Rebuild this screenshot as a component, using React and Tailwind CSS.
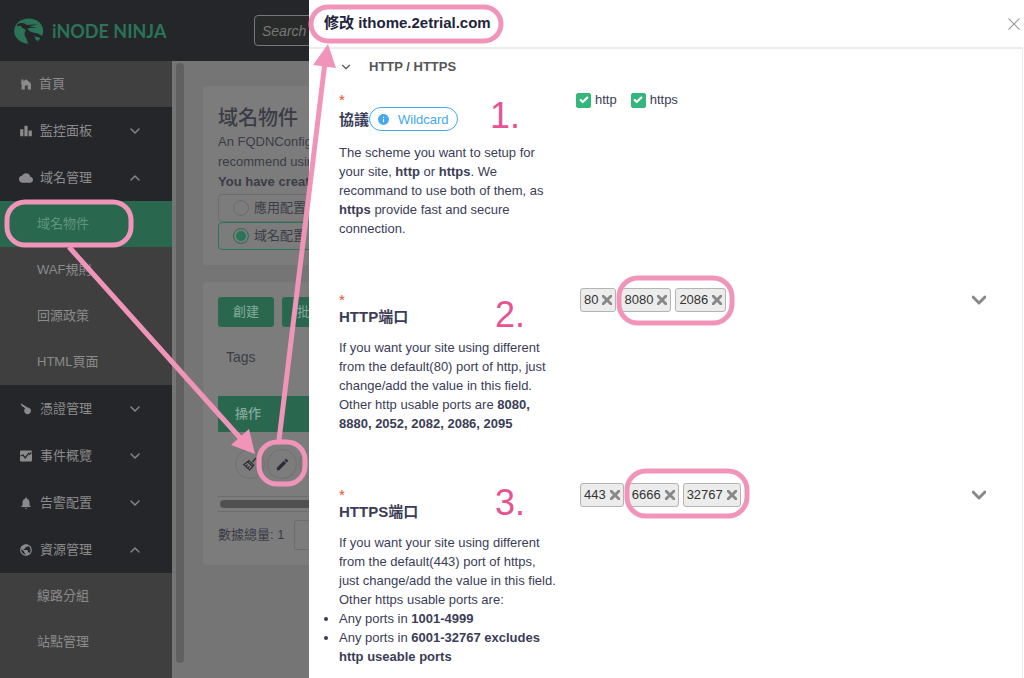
import {
  MdCloud,
  MdNotifications,
  MdPublic,
  MdEdit,
  MdInfo,
  MdLeaderboard,
} from 'react-icons/md'
import { ChevronDown, ChevronUp, X, Check } from 'lucide-react'

const tint = '#f095b9'

function HomeIcon({ className }) {
  return (
    <svg viewBox="0 0 14 14" className={className} fill="currentColor">
      <path d="M2.4 2.4 H4.4 V4.2 L7.2 2.2 L12 6.6 V12.4 H8.8 V8.6 H5.8 V12.4 H2.6 V7 H1.6 L2.4 6 Z" />
    </svg>
  )
}

function KeyIcon({ className }) {
  return (
    <svg viewBox="-1 -1 14 14" className={className} fill="currentColor">
      <path d="M1.2 0.6 L0.6 2 L2 2.6 L2.2 3.8 L3.6 4 L5 5.6 A3.4 3.4 0 1 0 7.6 4.4 Z" />
    </svg>
  )
}

function ChartIcon({ className }) {
  return (
    <svg viewBox="-1 -1 14 14" className={className}>
      <rect x="0" y="0.5" width="12" height="11" rx="1" fill="currentColor" />
      <path d="M0.5 6 L3 5 L5.2 8 L8.6 3.4 L9.6 4.4 L11.4 2.4" fill="none" stroke="#25262a" strokeWidth="1.3" />
    </svg>
  )
}

const menu = [
  { label: '監控面板', icon: MdLeaderboard },
  { label: '域名管理', icon: MdCloud, children: ['域名物件', 'WAF規則', '回源政策', 'HTML頁面'] },
  { label: '憑證管理', icon: KeyIcon },
  { label: '事件概覽', icon: ChartIcon },
  { label: '告警配置', icon: MdNotifications },
  { label: '資源管理', icon: MdPublic, children: ['線路分組', '站點管理'] },
]

function Logo() {
  return (
    <a href="#home" className="flex w-[240px] shrink-0 items-center gap-2 text-[#2b7458]">
      <svg viewBox="0 0 30 26" className="h-[26px] w-[30px]">
        <ellipse cx="14.7" cy="13" rx="14.5" ry="12.6" fill="currentColor" />
        <g fill="#25262a">
          <path d="M3 6.8 C4.6 5 7.4 4.6 9.6 5.2 C11 5.5 12 6.2 12.8 7 L24 6.2 L15 8.4 L23.4 9.4 L13.4 10.2 C14.4 12.4 16.4 14 19 14.6 C22.6 15.2 26 16.2 28.8 18.6 L26.6 21 C25.4 19.8 23.4 19 20.6 18.6 C20.8 20 21.6 21.6 23.2 22.6 L21 26 L15 26 C12.8 24.4 13.6 22.6 12.4 20.6 C11 18 9.6 16 11.6 12.4 C11 10.6 9.6 10.6 8 10 C7.6 8 5.6 7.2 3 8.4 Z" />
        </g>
        <path fill="currentColor" d="M20.6 18.6 L26.4 19.8 L23.4 22.8 L21.8 21.6 Z" />
      </svg>
      <span className="font-['Lato'] text-[18px] leading-6 font-bold">iNODE NINJA</span>
    </a>
  )
}

function Sidebar() {
  return (
    <nav className="w-[172px] shrink-0 bg-[#3f3f3f] text-[13px] text-[#8b8b8b]">
      <a href="#home" className="flex h-[46px] items-center bg-[#404040] pl-[19px]">
        <HomeIcon className="h-[14px] w-[14px]" />
        <span className="pl-[6px]">首頁</span>
      </a>
      {menu.map(({ label, icon: Icon, children }) => (
        <div key={label}>
          <button type="button" className="flex h-[47px] w-full items-center bg-[#25262a] pl-[19px] text-left">
            <Icon className="h-[14px] w-[14px]" />
            <span className="flex-1 pl-[7px]">{label}</span>
            {children ? <ChevronUp className="mr-[29px] h-4 w-4" /> : <ChevronDown className="mr-[29px] h-4 w-4" />}
          </button>
          {children?.map((child) => (
            <a
              key={child}
              href={`#${child}`}
              className={`flex h-[46px] items-center pl-[37px] ${child === '域名物件' ? 'bg-[#2a674f] text-[#5f9580]' : ''}`}
            >
              {child}
            </a>
          ))}
        </div>
      ))}
    </nav>
  )
}

function ConfigChoice({ label, checked }) {
  return (
    <label
      className={`flex h-7 items-center gap-[5px] rounded-sm border pl-[14px] text-[13px] ${checked ? 'border-[#2b7458]' : 'border-[#6c6c6c]'}`}
    >
      <input
        type="radio"
        name="config"
        defaultChecked={checked}
        className="h-4 w-4 appearance-none rounded-full border border-[#6c6c6c] checked:border-[#2b7458] checked:bg-[#2b7458] checked:shadow-[inset_0_0_0_2px_#7c7c7c]"
      />
      {label}
    </label>
  )
}

function BroomIcon() {
  return (
    <svg viewBox="0 0 14 14" className="h-[14px] w-[14px]" fill="none" stroke="#2b2c30" strokeWidth="1.2">
      <path d="M13 1 L9.4 5 M6 3.6 L10.6 8 L9.6 9.6 L4.6 4.8 Z M4.6 4.8 L0.8 7.6 L6.6 13 L9.6 9.6 M2.8 9.4 L4.6 7.6 M4.8 11.2 L6.6 9.4" />
    </svg>
  )
}

function RoundButton({ label, children }) {
  return (
    <button
      type="button"
      aria-label={label}
      className="flex h-[30px] w-[30px] shrink-0 items-center justify-center rounded-full border border-[#707070]"
    >
      {children}
    </button>
  )
}

function Page() {
  return (
    <main className="flex min-w-0 flex-1 flex-col gap-[17px] bg-[#757575] pt-[25px] pl-[19px] text-[#3b3c46]">
      <section className="rounded-sm bg-[#7c7c7c] px-[15px] pt-[18px] pb-[15px]">
        <h1 className="text-[20px] leading-7 font-medium">域名物件</h1>
        <p className="text-[13px] leading-5">
          An FQDNConfig
          <br />
          recommend using
        </p>
        <p className="text-[13px] leading-5 font-bold">You have created</p>
        <div className="pt-[2px]">
          <ConfigChoice label="應用配置" />
          <ConfigChoice label="域名配置" checked />
        </div>
      </section>

      <section className="rounded-sm bg-[#7c7c7c] px-[15px] pt-[15px] pb-[15px]">
        <div className="flex gap-2 text-[13px] text-[#83ab9b]">
          <button type="button" className="h-[30px] w-14 rounded-[3px] bg-[#2a674f]">創建</button>
          <button type="button" className="h-[30px] w-14 rounded-[3px] bg-[#2a674f]">批量</button>
        </div>
        <p className="px-2 pt-5 pb-[29px] text-[14px] leading-5">Tags</p>
        <table className="w-full text-left text-[13px]">
          <thead>
            <tr className="h-9 bg-[#2a674f] text-[#83ab9b]">
              <th className="pl-[17px] font-medium">操作</th>
            </tr>
          </thead>
          <tbody>
            <tr className="h-16">
              <td className="pl-[17px]">
                <div className="flex gap-[2px]">
                  <RoundButton label="清除"><BroomIcon /></RoundButton>
                  <RoundButton label="編輯"><MdEdit className="h-[15px] w-[15px] text-[#2c2d38]" /></RoundButton>
                  <RoundButton label="刪除" />
                </div>
              </td>
            </tr>
          </tbody>
        </table>
        <div className="border-y border-[#6d6d6d] py-[3px] pl-[2px]">
          <div className="h-2 rounded-full bg-[#505050]" />
        </div>
        <div className="flex items-center gap-[10px] pt-2 text-[13px]">
          <label htmlFor="page-size">數據總量: 1</label>
          <select id="page-size" className="h-[30px] w-24 appearance-none rounded-[3px] border border-[#6c6c6c] pl-6">
            <option>10</option>
          </select>
        </div>
      </section>
    </main>
  )
}

function Chips({ label, values }) {
  return (
    <div role="group" aria-label={label} className="flex flex-1 items-center gap-1 pr-[36px] pl-1 text-[13px] text-[#333]">
      {values.map((v) => (
        <span key={v} className="flex h-6 items-center gap-1 rounded-[3px] border border-[#b4b4b4] bg-[#ececec] px-[3px]">
          {v}
          <button type="button" aria-label={`Remove ${v}`} className="text-[#888]">
            <X className="h-[10px] w-[10px]" viewBox="5 5 14 14" strokeWidth={4} />
          </button>
        </span>
      ))}
      <button type="button" aria-label={`Open ${label}`} className="ml-auto text-[#888]">
        <ChevronDown className="h-[14px] w-[14px]" viewBox="5 5 14 14" strokeWidth={3} />
      </button>
    </div>
  )
}

function Field({ title, badge, control, children }) {
  return (
    <div className="flex items-start">
      <div className="w-[237px] shrink-0 pt-1 text-[#3b3d57]">
        <div className="h-[15px] text-[15px] leading-[15px] text-[#f04a24]">*</div>
        <div className="flex items-center text-[15px] leading-[19px] font-bold">
          {title}
          {badge}
        </div>
        <div className="w-[219px] pt-3 text-[13px] leading-[19px]">{children}</div>
      </div>
      <div className="flex h-6 min-w-0 flex-1 items-center">{control}</div>
    </div>
  )
}

function SchemeCheckbox({ name }) {
  return (
    <label className="flex items-center gap-1 text-[13px] text-[#3b3d57]">
      <span className="grid">
        <input
          type="checkbox"
          defaultChecked
          className="col-start-1 row-start-1 h-[15px] w-[15px] appearance-none rounded-[2px] border border-[#35b67d] checked:bg-[#35b67d]"
        />
        <Check className="pointer-events-none col-start-1 row-start-1 m-auto h-[10px] w-[10px] text-white" strokeWidth={5} />
      </span>
      {name}
    </label>
  )
}

function Drawer() {
  return (
    <div role="dialog" aria-labelledby="drawer-title" className="absolute inset-y-0 right-0 left-[309px] overflow-hidden bg-white">
      <header className="flex h-[47px] items-center justify-between pr-1 pl-[15px]">
        <h2 id="drawer-title" className="text-[15px] font-bold text-[#22243c]">修改 ithome.2etrial.com</h2>
        <button type="button" aria-label="Close" className="text-[#999]">
          <X className="h-3 w-3" viewBox="5 5 14 14" strokeWidth={1.4} />
        </button>
      </header>
      <div className="mr-px h-full border-t-2 border-r border-[#ececec] pl-[30px]">
        <button type="button" className="flex h-9 items-center text-[13px] font-bold text-[#555]">
          <ChevronDown className="h-[14px] w-[14px]" />
          <span className="pl-4">HTTP / HTTPS</span>
        </button>
        <div className="flex flex-col gap-[50px] pt-[3px]">
          <Field
            title="協議"
            badge={
              <span className="flex h-6 items-center gap-2 rounded-full border border-[#45a8f0] pr-2 pl-[7px] text-[13px] font-normal text-[#45a8f0]">
                <MdInfo className="h-[13px] w-[13px]" />
                Wildcard
              </span>
            }
            control={
              <div className="flex gap-[14px]">
                <SchemeCheckbox name="http" />
                <SchemeCheckbox name="https" />
              </div>
            }
          >
            The scheme you want to setup for your site, <b>http</b> or <b>https</b>. We recommand to use both of them,
            as <b>https</b> provide fast and secure connection.
          </Field>
          <Field title="HTTP端口" control={<Chips label="HTTP端口" values={['80', '8080', '2086']} />}>
            If you want your site using different from the default(80) port of http, just change/add the value in this
            field. Other http usable ports are <b>8080, 8880, 2052, 2082, 2086, 2095</b>
          </Field>
          <Field title="HTTPS端口" control={<Chips label="HTTPS端口" values={['443', '6666', '32767']} />}>
            If you want your site using different from the default(443) port of https, just change/add the value in
            this field. Other https usable ports are:
            <ul className="list-disc">
              <li>Any ports in <b>1001-4999</b></li>
              <li>Any ports in <b>6001-32767 excludes http useable ports</b></li>
            </ul>
          </Field>
        </div>
      </div>
    </div>
  )
}

function Annotations() {
  return (
    <div className="pointer-events-none absolute inset-0 overflow-hidden text-4xl text-[#e65292]">
      <svg width="1024" height="678" viewBox="0 0 1024 678" fill="none" stroke={tint} strokeWidth="5">
        <rect x="311" y="7" width="190" height="34" rx="17" />
        <rect x="7" y="202" width="124" height="43" rx="18" />
        <rect x="259" y="442" width="46" height="42" rx="18" />
        <rect x="619" y="278" width="113" height="45" rx="19" />
        <rect x="627" y="471" width="120" height="45" rx="19" />
        <path d="M69 247 L242 440 M279 440 L325 62" />
        <path d="M255 454 L231 445 L249 429 Z M328 44 L313 65 L336 68 Z" fill={tint} stroke="none" />
      </svg>
      <span className="absolute top-[96px] left-[490px]">1.</span>
      <span className="absolute top-[295px] left-[495px]">2.</span>
      <span className="absolute top-[483px] left-[495px]">3.</span>
    </div>
  )
}

export default function App() {
  return (
    <div className="relative flex h-screen flex-col overflow-hidden bg-[#757575] font-['Liberation_Sans','Noto_Sans_CJK_TC',sans-serif]">
      <header className="flex h-[61px] shrink-0 items-center bg-[#25262a] pl-[14px]">
        <Logo />
        <input
          type="search"
          aria-label="Search"
          placeholder="Search a"
          className="h-[31px] w-64 rounded-[4px] border border-[#777] bg-[#292a2a] px-[7px] text-[14px] italic placeholder:text-[#777]"
        />
      </header>
      <div className="flex min-h-0 flex-1">
        <Sidebar />
        <div className="w-3 shrink-0 bg-[#757575] pt-[2px] pb-[15px] pl-1">
          <div className="h-full rounded-full bg-[#606060]" />
        </div>
        <Page />
      </div>
      <Drawer />
      <Annotations />
    </div>
  )
}
